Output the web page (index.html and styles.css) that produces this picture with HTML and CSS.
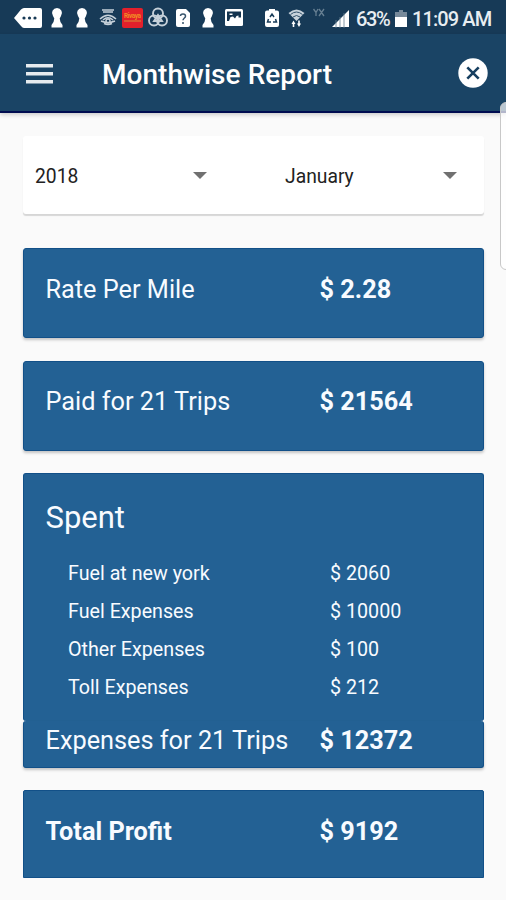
FILE: index.html
```html
<!DOCTYPE html>
<html lang="en">
<head>
<meta charset="utf-8">
<title>Monthwise Report</title>
<link rel="stylesheet" href="styles.css">
</head>
<body>
<div class="screen">
  <div class="status">
    <svg class="ic chat" width="28" height="22" viewBox="0 0 28 22"><path d="M0 11 7 2.500Q8.500 1 10 1H26Q28 1 28 3V19Q28 21 26 21H10Q8.500 21 7 19Z" fill="#fff"/><g fill="#173955"><circle cx="10" cy="11" r="1.600"/><circle cx="15.500" cy="11" r="1.600"/><circle cx="21" cy="11" r="1.600"/></g></svg>
    <svg class="ic key1" width="12" height="22" viewBox="0 0 12 22"><path d="M6 1a5 5 0 0 1 4 8L8.700 11.500Q9 16 11.500 18V20.500H.5V18Q3 16 3.300 11.500L2 9A5 5 0 0 1 6 1Z" fill="#fff"/></svg>
    <svg class="ic key2" width="12" height="22" viewBox="0 0 12 22"><path d="M6 1a5 5 0 0 1 4 8L8.700 11.500Q9 16 11.500 18V20.500H.5V18Q3 16 3.300 11.500L2 9A5 5 0 0 1 6 1Z" fill="#fff"/></svg>
    <svg class="ic hot" width="18" height="22" viewBox="0 0 18 22" fill="none" stroke="#c5d0d9" stroke-width="1.500"><path d="M3 3h12M4 5h10" stroke-width="1.300"/><path d="M1 12Q9 4.500 17 12M4 13q5-4.500 10 0M2 14q7 3 14 0M5 16.500q4 2 8 0"/><circle cx="9" cy="14" r="2"/></svg>
    <svg class="ic red" width="21" height="22" viewBox="0 0 21 22"><rect y="1" width="21" height="20" rx="2" fill="#e3202b"/><text x="2" y="11" font-size="6.500" font-weight="700" textLength="17" fill="#f28b25">Rivaya</text><path d="M2 14h17" stroke="#dc7834" stroke-width="1.300"/></svg>
    <svg class="ic rings" width="20" height="22" viewBox="0 0 20 22" fill="none" stroke="#c5d0d9" stroke-width="1.900"><circle cx="10" cy="6.500" r="5"/><circle cx="6" cy="13.500" r="5"/><circle cx="14" cy="13.500" r="5"/><path d="m10 8 4 6H6Z"/></svg>
    <svg class="ic help" width="14" height="22" viewBox="0 0 14 22"><path d="M2 2h8l4 4v12q0 2-2 2H2q-2 0-2-2V4Q0 2 2 2Z" fill="#fff"/><path d="M4.500 9Q4.500 7 7 7t2.500 2.200C9.500 11 7 11 7 13.300M7 15v2" stroke="#36536b" stroke-width="1.500" fill="none"/></svg>
    <svg class="ic key3" width="12" height="22" viewBox="0 0 12 22"><path d="M6 1a5 5 0 0 1 4 8L8.700 11.500Q9 16 11.500 18V20.500H.5V18Q3 16 3.300 11.500L2 9A5 5 0 0 1 6 1Z" fill="#fff"/></svg>
    <svg class="ic pic" width="18" height="22" viewBox="0 0 18 22"><rect y="2" width="18" height="17" rx="1.500" fill="#fff"/><path d="M2 4.500h14v6h-2.500v-2l-2 .5-1.500 2.500-2-2-2.500.5L4 14H2Z" fill="#14344f"/><path d="M4.500 6.500h3v1.500h-3Z" fill="#fff"/></svg>
    <svg class="ic recycle" width="14" height="22" viewBox="0 0 14 22"><path d="M2 3.500h2V2h6v1.500h2q2 0 2 2V18q0 2-2 2H2q-2 0-2-2V5.500q0-2 2-2Z" fill="#fff"/><path d="m5 10 2-3 2 3M3.500 12 2.500 15H6M8 15h3.500l-1-3" fill="none" stroke="#193c59" stroke-width="1.500"/></svg>
    <svg class="ic wifi" width="17" height="22" viewBox="0 0 17 22"><path d="M.5 6Q8.500-1 16.500 6L8.500 14Z" fill="#c7d2db"/><path d="M2.500 7.500q6-5 12 0M5 10q3.500-3 7 0" fill="none" stroke="#31516b" stroke-width="1"/><path d="m3.500 17 2-3.500 2 3.500H6.300v3H4.700v-3ZM9 16.500h1.200v-3h1.600v3H13L11 20Z" fill="#fff"/></svg>
    <svg class="ic net" width="12" height="22" viewBox="0 0 12 22" fill="none" stroke="#667f92" stroke-width="1.300"><path d="m.5 2 2.500 3.500L5 2M3 5v4M6 2l5 7M11 2 6 9"/></svg>
    <svg class="ic signal" width="17" height="22" viewBox="0 0 17 22"><path d="M0 19 17 2V19Z" fill="#fff"/><path d="M4 12v8M8 9v11M12 5v15" stroke="#647d91" stroke-width=".8"/></svg>
    <span class="pct">63%</span>
    <svg class="ic batt" width="12" height="22" viewBox="0 0 12 22"><path d="M4 2h4v2h4v5H0V4h4Z" fill="#76899a"/><path d="M0 9h12v10H0Z" fill="#fff"/></svg>
    <span class="time">11:09 AM</span>
  </div>
  <header class="appbar">
    <svg class="menu" width="27" height="20" viewBox="0 0 27 20"><path d="M0 1.800h27M0 9.800h27M0 17.800h27" stroke="#e6ebef" stroke-width="3.400"/></svg>
    <h1 class="title">Monthwise Report</h1>
    <svg class="close" width="30" height="30" viewBox="0 0 30 30"><circle cx="15" cy="15" r="14.700" fill="#fff"/><path d="m9.300 9.300 11.400 11.400M20.700 9.300 9.300 20.700" stroke="#173f60" stroke-width="2.600"/></svg>
  </header>
  <main class="content">
    <section class="filters">
      <div class="select"><span class="year">2018</span><i class="caret"></i></div>
      <div class="select"><span class="month">January</span><i class="caret"></i></div>
    </section>
    <section class="card"><div class="row"><span class="label">Rate Per Mile</span><b class="amount">$ 2.28</b></div></section>
    <section class="card paid"><div class="row"><span class="label">Paid for 21 Trips</span><b class="amount">$ 21564</b></div></section>
    <section class="card spent">
      <h2 class="heading"><span>Spent</span></h2>
      <div class="item"><span>Fuel at new york</span><span>$ 2060</span></div>
      <div class="item"><span>Fuel Expenses</span><span>$ 10000</span></div>
      <div class="item"><span>Other Expenses</span><span>$ 100</span></div>
      <div class="item"><span>Toll Expenses</span><span>$ 212</span></div>
    </section>
    <section class="card sum"><div class="row"><span class="label">Expenses for 21 Trips</span><b class="amount">$ 12372</b></div></section>
    <section class="card profit"><div class="row"><b class="label">Total Profit</b><b class="amount">$ 9192</b></div></section>
  </main>
  <div class="edge"></div>
</div>
</body>
</html>
```
FILE: styles.css
```css
* { box-sizing: border-box; }
body { margin: 0; font-family: Roboto, "Liberation Sans", sans-serif; }
.screen { position: relative; width: 506px; height: 900px; overflow: hidden; background: #fafafa; }

.status { display: flex; align-items: center; height: 34px; background: #173a57; color: #e8edf1; }
.ic { flex: none; display: block; overflow: visible; margin-top: 1px; }
.chat { margin-left: 14px; }
.key1 { margin-left: 9px; }
.key2 { margin-left: 13px; }
.hot { margin-left: 11px; }
.red { margin-left: 5px; }
.rings { margin-left: 5px; }
.help { margin-left: 8px; }
.key3 { margin-left: 12px; }
.pic { margin-left: 11px; }
.recycle { margin-left: 22px; }
.wifi { margin-left: 9px; }
.net { margin-left: 8px; }
.signal { margin-left: 7px; margin-top: 4px; }
.pct, .time { padding-top: 3px; font-size: 20px; font-weight: 500; line-height: 32px; white-space: nowrap; }
.pct { width: 38px; padding-left: 7px; letter-spacing: -1.4px; }
.batt { margin-left: 8px; margin-top: 3px; }
.time { margin-left: 5px; letter-spacing: -.9px; }

.appbar { display: flex; align-items: center; height: 79px; border-bottom: 2px solid #000c50; background: #1a4465; box-shadow: 0 2px 4px rgba(0, 0, 0, .18); }
.menu { margin-left: 26px; margin-top: 3px; }
.title { margin: 5px 0 0 49px; font-size: 28px; font-weight: 500; letter-spacing: .05px; line-height: 40px; white-space: nowrap; color: #fff; }
.close { margin-left: auto; margin-right: 18px; margin-top: 1px; }

.content { padding: 23px 22px 0 23px; }
.filters { display: grid; grid-template-columns: 250px 211px; height: 78px; margin-bottom: 34px; border-radius: 3px; background: #fff; box-shadow: 0 2px 1px rgba(0, 0, 0, .14); }
.select { display: flex; align-items: center; justify-content: space-between; width: 184px; padding: 2px 0 0 12px; font-size: 19.300px; color: #222; }
.caret { width: 0; height: 0; margin-top: -1px; border: 7px solid transparent; border-top-color: #707070; border-bottom: 0; }

.card { width: 461px; height: 90px; margin-bottom: 23px; padding-top: 23px; border: 1px solid #125088; border-radius: 3px; background: #236194; box-shadow: 0 2px 3px rgba(0, 0, 0, .22); color: #f8fbff; }
.row { display: grid; grid-template-columns: 274px 1fr; padding-left: 21.500px; font-size: 25.300px; line-height: 36px; white-space: nowrap; }
.amount { font-weight: 700; }
.paid { margin-bottom: 22px; padding-top: 22px; }
.spent { height: 248px; margin-bottom: 0; padding-top: 24px; border-bottom: 0; box-shadow: none; }
.heading { margin: 0 0 17px; padding-left: 21.500px; font-size: 31px; font-weight: 400; line-height: 40px; }
.item { display: grid; grid-template-columns: 262px 1fr; padding-left: 44px; font-size: 19.700px; line-height: 38px; white-space: nowrap; }
.sum { height: 47px; margin-bottom: 22px; padding-top: 2px; border-top: 0; }
.profit { height: 88px; border-radius: 2px 2px 0 0; box-shadow: none; }
.edge { position: absolute; top: 102px; right: -8px; width: 14px; height: 168px; border: 1px solid #c8c8c8; border-radius: 6px; background: rgba(255, 255, 255, .7); }
```
